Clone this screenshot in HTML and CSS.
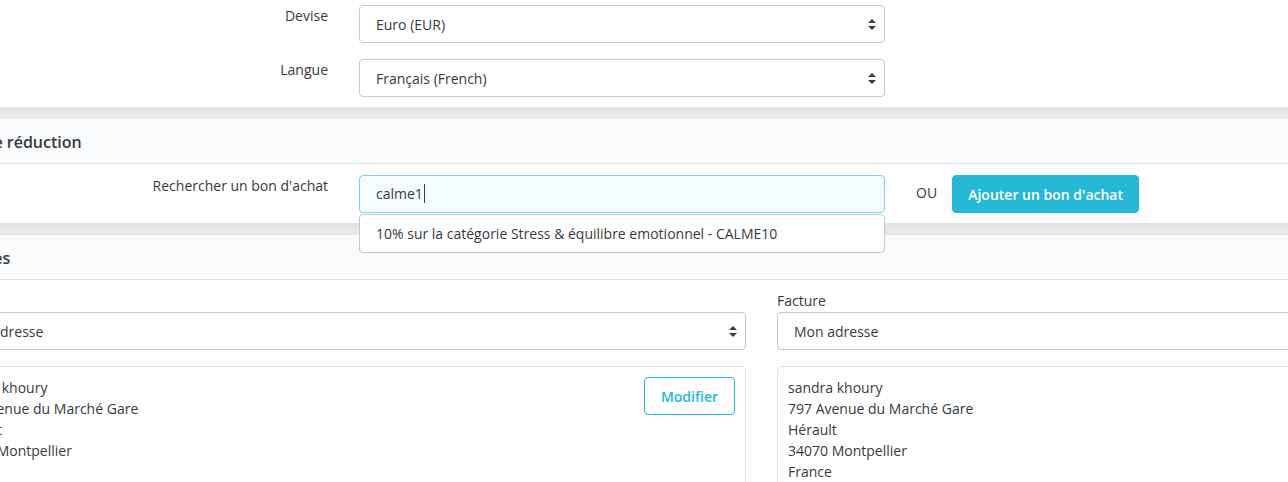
FILE: index.html
```html
<!DOCTYPE html>
<html lang="fr">
<head>
  <meta charset="UTF-8">
  <title>Nouvelle commande</title>
  <link rel="stylesheet" href="styles.css">
</head>
<body>
  <div class="page">

    <!-- Devise / langue -->
    <div class="panel panel-top">
      <div class="form-row">
        <label class="form-label">Devise</label>
        <div class="select">
          <span>Euro (EUR)</span>
          <svg class="arrows" width="8" height="11" viewBox="0 0 8 11"><path d="M4 0L8 4H0z M4 11L0 7H8z" fill="#363a41"/></svg>
        </div>
      </div>
      <div class="form-row">
        <label class="form-label">Langue</label>
        <div class="select">
          <span>Français (French)</span>
          <svg class="arrows" width="8" height="11" viewBox="0 0 8 11"><path d="M4 0L8 4H0z M4 11L0 7H8z" fill="#363a41"/></svg>
        </div>
      </div>
    </div>

    <!-- Bons de réduction -->
    <div class="panel">
      <div class="panel-heading">Bons de réduction</div>
      <div class="panel-body voucher-body">
        <div class="form-row">
          <label class="form-label">Rechercher un bon d'achat</label>
          <div class="autocomplete">
            <div class="input focused">calme1<span class="caret"></span></div>
            <ul class="suggestions">
              <li>10% sur la catégorie Stress &amp; équilibre emotionnel - CALME10</li>
            </ul>
          </div>
          <span class="or">OU</span>
          <button class="btn btn-primary">Ajouter un bon d'achat</button>
        </div>
      </div>
    </div>

    <!-- Adresses -->
    <div class="panel">
      <div class="panel-heading">Adresses</div>
      <div class="panel-body address-body">
        <div class="address-col">
          <label class="col-label">Livraison</label>
          <div class="select">
            <span>Mon adresse</span>
            <svg class="arrows" width="8" height="11" viewBox="0 0 8 11"><path d="M4 0L8 4H0z M4 11L0 7H8z" fill="#363a41"/></svg>
          </div>
          <div class="address-box">
            <div class="address-lines">
              sandra khoury<br>
              797 Avenue du Marché Gare<br>
              Hérault<br>
              34070 Montpellier<br>
              France
            </div>
            <button class="btn btn-outline">Modifier</button>
          </div>
        </div>
        <div class="address-col">
          <label class="col-label">Facture</label>
          <div class="select">
            <span>Mon adresse</span>
            <svg class="arrows" width="8" height="11" viewBox="0 0 8 11"><path d="M4 0L8 4H0z M4 11L0 7H8z" fill="#363a41"/></svg>
          </div>
          <div class="address-box">
            <div class="address-lines">
              sandra khoury<br>
              797 Avenue du Marché Gare<br>
              Hérault<br>
              34070 Montpellier<br>
              France
            </div>
            <button class="btn btn-outline">Modifier</button>
          </div>
        </div>
      </div>
    </div>

  </div>
</body>
</html>
```

FILE: styles.css
```css
html, body {
  margin: 0;
  padding: 0;
  overflow: hidden;
}

body {
  background-color: #e6e8ea;
  font-family: "Open Sans", "Liberation Sans", sans-serif;
  font-size: 14px;
  color: #363a41;
}

.page {
  margin-left: -100px;
  width: 1800px;
}

.panel {
  background-color: #ffffff;
  border-bottom: 1px solid #dbe6e9;
  margin-bottom: 11px;
  box-shadow: 0 2px 3px rgba(0, 0, 0, 0.03);
}

.panel-top {
  padding: 5px 0 10px;
}

.panel-heading {
  box-sizing: border-box;
  height: 45px;
  line-height: 44px;
  padding: 1px 0 0 41px;
  background-color: #fafbfc;
  border-bottom: 1px solid #dbe6e9;
  font-size: 16px;
  font-weight: 600;
}

.form-row {
  display: flex;
  align-items: flex-start;
  margin-bottom: 16px;
}

.form-row:last-child {
  margin-bottom: 0;
}

.form-label {
  width: 428px;
  flex-shrink: 0;
  text-align: right;
  padding-top: 1px;
  line-height: 20px;
}

.select {
  display: flex;
  justify-content: space-between;
  align-items: center;
  box-sizing: border-box;
  height: 38px;
  padding: 0 8px 0 16px;
  border: 1px solid #bbcdd2;
  border-radius: 4px;
  background-color: #ffffff;
}

.form-row .select,
.autocomplete {
  margin-left: 31px;
  width: 526px;
  flex-shrink: 0;
}

/* Bons de réduction */
.voucher-body {
  padding: 11px 0 10px;
}

.voucher-body .form-row {
  height: 38px;
}

.autocomplete {
  position: relative;
}

.input {
  box-sizing: border-box;
  height: 38px;
  line-height: 36px;
  padding-left: 16px;
  border: 1px solid #7cd5e7;
  border-radius: 4px;
  background-color: #f4fcfd;
}

.caret {
  display: inline-block;
  width: 1px;
  height: 19px;
  margin-left: 1px;
  vertical-align: -4px;
  background-color: #363a41;
}

.suggestions {
  position: absolute;
  top: 39px;
  left: 0;
  right: 0;
  margin: 0;
  padding: 0;
  list-style: none;
  background-color: #ffffff;
  border: 1px solid #bbcdd2;
  border-radius: 4px;
  z-index: 5;
}

.suggestions li {
  height: 37px;
  line-height: 37px;
  padding-left: 16px;
}

.or {
  margin-left: 31px;
  line-height: 36px;
}

.btn {
  box-sizing: border-box;
  height: 38px;
  padding: 0 15px;
  border-radius: 4px;
  font-family: inherit;
  font-size: 14px;
  font-weight: 600;
  cursor: pointer;
}

.btn-primary {
  margin-left: 15px;
  width: 187px;
  border: 1px solid #25b9d7;
  background-color: #25b9d7;
  color: #ffffff;
}

.btn-outline {
  width: 91px;
  border: 1px solid #25b9d7;
  background-color: #ffffff;
  color: #25b9d7;
}

/* Adresses */
.address-body {
  display: flex;
  gap: 31px;
  padding: 11px 0 20px 42px;
}

.address-col {
  width: 804px;
  flex-shrink: 0;
}

.col-label {
  display: block;
  line-height: 20px;
  margin-bottom: 1px;
}

.address-box {
  display: flex;
  justify-content: space-between;
  align-items: flex-start;
  margin-top: 16px;
  padding: 10px;
  border: 1px solid #dbe6e9;
  border-radius: 4px;
  line-height: 21px;
}
```
